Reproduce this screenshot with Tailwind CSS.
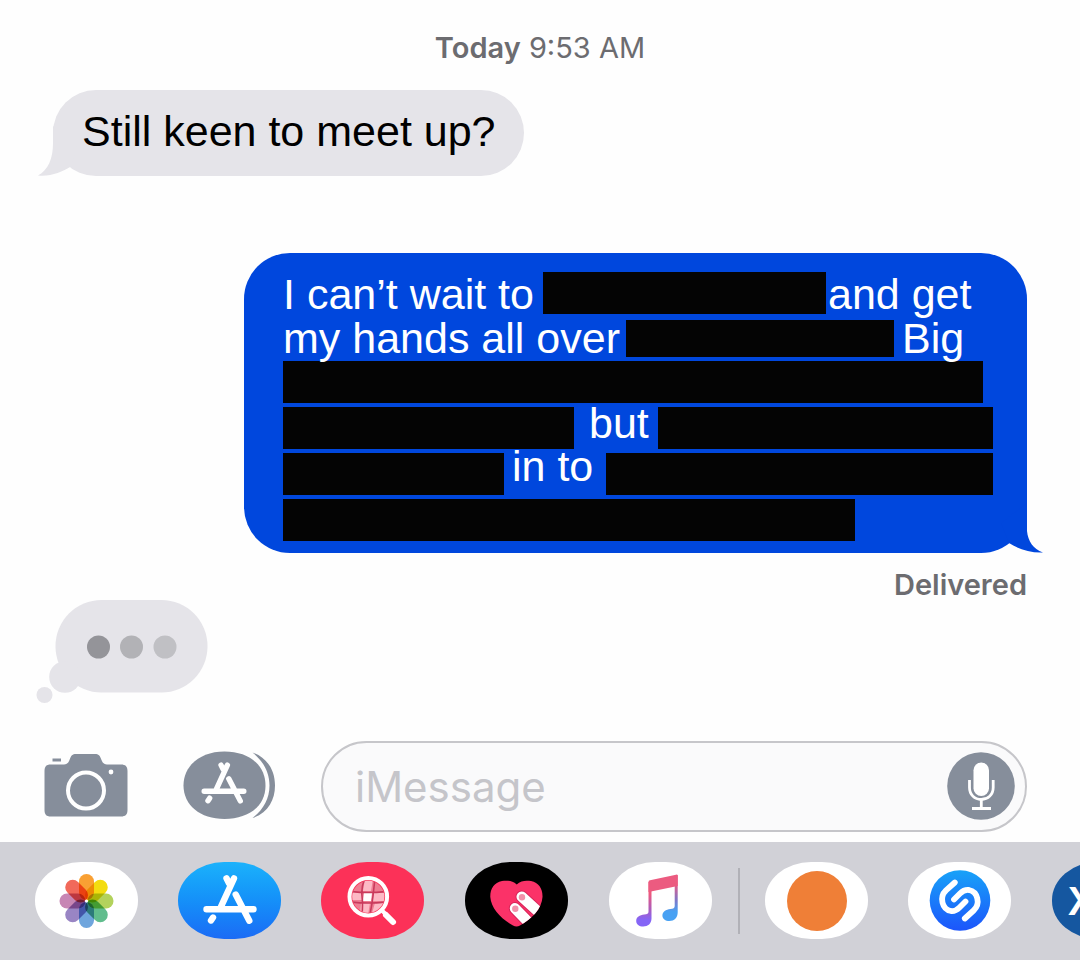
<!DOCTYPE html>
<html lang="en">
<head>
<meta charset="utf-8">
<meta name="viewport" content="width=device-width, initial-scale=1">
<title>Messages</title>
<script src="https://cdn.jsdelivr.net/npm/@tailwindcss/browser@4"></script>
</head>
<body class="bg-[#fefefe] overflow-x-hidden">
<svg class="hidden" aria-hidden="true">
  <symbol id="store" viewBox="0 0 54 51">
    <g fill="none" stroke="#fff" stroke-width="6.400" stroke-linecap="round">
      <path d="M31 4.300 18 32.700M23.500 4.300l2.500 5M32.700 20.500 46.300 46.700M3.500 35.300h47M10 43.500l-2 3"/>
    </g>
  </symbol>
</svg>
<div class="flex min-h-screen flex-col font-['Inter',sans-serif]">
  <main class="flex flex-1 flex-col">
    <p class="pt-8 text-center text-[29px] leading-8 text-[#6c6c70]"><span class="font-semibold">Today</span> 9:53 AM</p>

    <div class="relative mt-[26px] ml-[53px] flex h-[86px] items-center self-start rounded-[43px] bg-[#e5e4e9] pr-7 pl-[29px] font-['Liberation_Sans',Arial,sans-serif] text-[43px] leading-[48px] text-black">
      <svg class="absolute bottom-0 -left-4" width="44" height="50" viewBox="0 0 44 50" aria-hidden="true"><path fill="#e5e4e9" d="M16 0V17C16 33 11 44 1 49.500C13 51 25 46 34 40.500L40 20Z"/></svg>
      <p class="pb-1">Still keen to meet up?</p>
    </div>

    <div class="relative mt-[77px] mr-[53px] w-[783px] self-end rounded-[46px] bg-[#0047dd] pt-[19px] pb-3 pl-[39px] font-['Liberation_Sans',Arial,sans-serif] text-[43px] whitespace-nowrap text-white">
      <svg class="absolute -right-4 bottom-0" width="46" height="50" viewBox="0 0 46 50" aria-hidden="true"><path fill="#0047dd" d="M30 0V28C31 38 36 46 46 49.500C33 50 21 46 12 40L4 20Z"/></svg>
      <div class="flex flex-col gap-1">
        <div class="mb-0.5 flex h-[42px]">
          <span class="w-[260px] leading-11">I can’t wait to</span><span class="w-[283px] bg-[#040404]"></span><span class="ml-0.5 leading-11">and get</span>
        </div>
        <div class="flex h-[37px]">
          <span class="z-10 w-[343px] leading-9">my hands all over</span><span class="w-[268px] bg-[#040404]"></span><span class="z-10 ml-2 leading-9">Big</span>
        </div>
        <div class="h-[42px] w-[700px] bg-[#040404]"></div>
        <div class="flex h-[42px]">
          <span class="w-[291px] bg-[#040404]"></span><span class="ml-[15px] w-[69px] leading-8">but</span><span class="w-[335px] bg-[#040404]"></span>
        </div>
        <div class="flex h-[42px]">
          <span class="w-[221px] bg-[#040404]"></span><span class="ml-2 w-[94px] leading-[26px]">in to</span><span class="w-[387px] bg-[#040404]"></span>
        </div>
        <div class="h-[42px] w-[572px] bg-[#040404]"></div>
      </div>
    </div>
    <p class="mt-4 mr-[53px] self-end text-[29px] leading-8 font-semibold text-[#6c6c70]">Delivered</p>

    <svg class="-mt-px ml-9" width="172" height="104" viewBox="36 600 172 104" role="img" aria-label="Typing">
      <g fill="#e5e4e9"><rect x="55.500" y="600" width="152" height="92.500" rx="46"/><circle cx="65" cy="677" r="15.800"/><circle cx="44.500" cy="695" r="8"/></g>
      <circle cx="98.500" cy="647" r="11.500" fill="#949499"/><circle cx="131.500" cy="647" r="11.500" fill="#b2b2b6"/><circle cx="165" cy="647" r="11.500" fill="#c0c0c4"/>
    </svg>
  </main>

  <form class="mb-2.5 flex items-center pr-[53px] pl-11">
    <button type="button" aria-label="Camera" class="mb-0.5 shrink-0">
      <svg width="84" height="65" viewBox="44 753 84 65"><path fill="#868e9b" d="M52.500 758.500h8.500v3h-8.500zM50.500 764.500H64c3 0 4.500-2 5.500-4.500 1.500-4.500 3-6 6.500-6h19c3.500 0 5 1.500 6.500 6 1 2.500 2.500 4.500 5.500 4.500h14c4.500 0 6.500 2 6.500 6.500v39c0 4.500-2 6.500-6.500 6.500H50.500c-4 0-6-2-6-6.500v-39c0-4.500 2-6.500 6-6.500z"/><circle cx="86" cy="790.500" r="18" fill="none" stroke="#fff" stroke-width="4"/><circle cx="111" cy="772" r="2.400" fill="#fff"/></svg>
    </button>
    <button type="button" aria-label="Apps" class="mb-0.5 ml-[55px] shrink-0">
      <svg width="92" height="70" viewBox="183 751 92 70"><path fill="#868e9b" d="M252.500 752.500C268 758 275 771 275 785.500S268 813 252.500 818C263 810 269.500 799 269.500 785.500S263 761 252.500 752.500z"/><path fill="#868e9b" d="M224.500 751.500C249 751.500 265.500 765 265.500 785.500S249 819 224.500 819 183.500 805 183.500 785.500 200 751.500 224.500 751.500z"/><use href="#store" x="200" y="761.500" width="48" height="43"/></svg>
    </button>
    <div class="ml-[46px] flex h-[91px] min-w-0 flex-1 items-center rounded-full border-2 border-[#c6c6ca] bg-[#fafafb] pr-2.5 pl-8">
      <input aria-label="Message" placeholder="iMessage" class="w-0 min-w-0 flex-1 text-[42px] leading-[52px] text-black outline-none placeholder:text-[#c5c5ca]">
      <button type="button" aria-label="Dictate" class="mb-0.5 shrink-0">
        <svg width="68" height="68" viewBox="947 751 68 68"><circle cx="981" cy="785" r="33.800" fill="#868e9b"/><rect x="973.500" y="761.500" width="15.500" height="33.500" rx="7.750" fill="#fff"/><path d="M969.500 779v7.500c0 7 5 12 11.800 12s11.900-5 11.900-12V779M981.300 799v8M972 807.500h19" fill="none" stroke="#fff" stroke-width="2.800"/></svg>
      </button>
    </div>
  </form>

  <nav aria-label="Apps" class="flex h-[118px] items-start overflow-hidden bg-[#d1d1d7] pt-5 pl-[35px]">
    <button aria-label="Photos" class="mr-10 h-[77px] w-[103px] shrink-0 overflow-hidden rounded-[46px/38px] bg-white">
      <svg width="103" height="77" viewBox="-51.500 -39 103 77" class="isolate">
        <g class="*:mix-blend-multiply">
          <rect x="-7.500" y="-27" width="15" height="26" rx="7.500" fill="#f9a033"/>
          <rect x="-7.500" y="-27" width="15" height="26" rx="7.500" fill="#f3dc10" transform="rotate(45)"/>
          <rect x="-7.500" y="-27" width="15" height="26" rx="7.500" fill="#b3d25c" transform="rotate(90)"/>
          <rect x="-7.500" y="-27" width="15" height="26" rx="7.500" fill="#61bd8d" transform="rotate(135)"/>
          <rect x="-7.500" y="-27" width="15" height="26" rx="7.500" fill="#6fa5dd" transform="rotate(180)"/>
          <rect x="-7.500" y="-27" width="15" height="26" rx="7.500" fill="#9985c4" transform="rotate(225)"/>
          <rect x="-7.500" y="-27" width="15" height="26" rx="7.500" fill="#c786b4" transform="rotate(270)"/>
          <rect x="-7.500" y="-27" width="15" height="26" rx="7.500" fill="#f1695a" transform="rotate(315)"/>
        </g>
        <circle r="1.500" fill="#fff"/>
      </svg>
    </button>
    <button aria-label="App Store" class="mr-10 flex h-[77px] w-[103px] shrink-0 justify-center rounded-[46px/38px] bg-linear-to-b from-[#1cb2fb] to-[#1c6bf5] pt-3">
      <svg width="54" height="51"><use href="#store"/></svg>
    </button>
    <button aria-label="Image search" class="mr-[41px] h-[77px] w-[103px] shrink-0 rounded-[46px/38px] bg-[#fc3158]">
      <svg width="103" height="77" viewBox="0 0 103 77">
        <clipPath id="lens"><circle cx="47.300" cy="34.700" r="16"/></clipPath>
        <g clip-path="url(#lens)"><path fill="#ee7d92" d="M30 17h35v36H30z"/><path fill="#fdb9c5" d="M44 17h8l-2 12h-8zM29 30h12v8H31zM54 41h10l-4 10H51zM40 41h9l-2 12h-8zM52 31h12v8H52z"/><path fill="#fff" d="M43 31h8l-1 8h-8z"/><path d="M44 16q-4 9-3 18t0 19M54 16q-1 9-2 18t-3 18M30 29.500q17 2 35 0M30 40q17 2 35 0" fill="none" stroke="#c93a5c" stroke-width="1.600"/></g>
        <circle cx="47.300" cy="34.700" r="18.800" fill="none" stroke="#fff" stroke-width="4"/>
        <path d="m60.500 48 5 5" stroke="#fff" stroke-width="4"/><path d="m65 53 7 7" stroke="#fff" stroke-width="6" stroke-linecap="round"/>
      </svg>
    </button>
    <button aria-label="Digital Touch" class="mr-[41px] h-[77px] w-[103px] shrink-0 rounded-[46px/38px] bg-black">
      <svg width="103" height="77" viewBox="0 0 103 77">
        <clipPath id="heart"><path id="heartShape" d="M51.700 22.500C47 18 41 18.500 37 19 29 20.500 25 27 25.300 35 26 46 36 57 48 63.500q3.500 2 7 0C67 57 77 46 77.500 35 77.800 27 74 20.500 66 19c-4-.5-10-1-14.300 3.500z"/></clipPath>
        <use href="#heartShape" fill="#fb3268"/>
        <g clip-path="url(#heart)"><path d="M56.700 34.700 80 56M50 46.300 70 67" stroke="#d8265a" stroke-width="12.500" stroke-linecap="round"/><path d="M56.700 34.700 80 56M50 46.300 70 67" stroke="#fff" stroke-width="10.500" stroke-linecap="round"/><circle cx="57" cy="35.200" r="3.200" fill="#f291aa"/><circle cx="50.300" cy="46.800" r="3.200" fill="#f291aa"/></g>
      </svg>
    </button>
    <button aria-label="Music" class="h-[77px] w-[103px] shrink-0 rounded-[46px/38px] bg-white">
      <svg width="103" height="77" viewBox="0 0 103 77">
        <defs><linearGradient id="noteL" x1="0" y1="0" x2="0" y2="1"><stop offset=".25" stop-color="#f0587b"/><stop offset=".6" stop-color="#ad5cba"/><stop offset=".85" stop-color="#8565f6"/></linearGradient>
        <linearGradient id="noteR" x1="0" y1="0" x2="0" y2="1"><stop offset=".2" stop-color="#e45c88"/><stop offset=".55" stop-color="#7e77c8"/><stop offset=".8" stop-color="#48a1f3"/></linearGradient></defs>
        <path fill="url(#noteL)" d="M39.500 20h3V56.500c0 5-3.500 8-8.300 8-4 0-7-2-7-5.500 0-4 3.500-6 8-6.500 3-.4 4.300-.7 4.300-3z"/>
        <path fill="url(#noteR)" d="M65.700 13h3v37.500c0 5-3.500 8.500-8.300 8.500-4 0-7-2-7-5.500 0-4 3.500-6 8-6.600 3-.4 4.300-.9 4.300-3z"/>
        <path fill="#ec5b80" d="M39.500 20q0-1.500 1.500-1.800l26-5.500q1.700-.4 1.700 1.300v10L39.500 30z"/>
      </svg>
    </button>
    <span class="mt-1.5 mr-[25px] ml-[26px] h-[66px] w-0.5 shrink-0 bg-[#b1b1b7]"></span>
    <button aria-label="Orange app" class="mr-10 flex h-[77px] w-[103px] shrink-0 items-center justify-center rounded-[46px/38px] bg-white"><span class="size-15 rounded-full bg-[#ef7f37]"></span></button>
    <button aria-label="Shazam" class="mr-[41px] h-[77px] w-[103px] shrink-0 rounded-[46px/38px] bg-white">
      <svg width="103" height="77" viewBox="0 0 103 77">
        <defs><linearGradient id="sz" x1="0" y1="0" x2="0" y2="1"><stop stop-color="#18a2f8"/><stop offset="1" stop-color="#1c55fb"/></linearGradient></defs>
        <circle cx="52" cy="38.500" r="30.300" fill="url(#sz)"/>
        <g fill="none" stroke="#fff" stroke-width="5.800" stroke-linecap="round"><path d="M46.800 20.500 38 28.300C31 35 34 47.500 43 49c4 .5 6-1 8.500-3.500L57.500 39.500"/><path d="m56.800 56.500 8.800-8C73 41.500 69.500 29.500 61 28c-4-.5-6.500 1-9 3.500L46 37.500"/></g>
      </svg>
    </button>
    <button class="h-[77px] w-[103px] shrink-0 rounded-[46px/38px] bg-[#1557a0] pl-4 text-left font-['Liberation_Sans',Arial,sans-serif] text-[40px] font-bold text-white">X</button>
  </nav>
</div>
</body>
</html>
